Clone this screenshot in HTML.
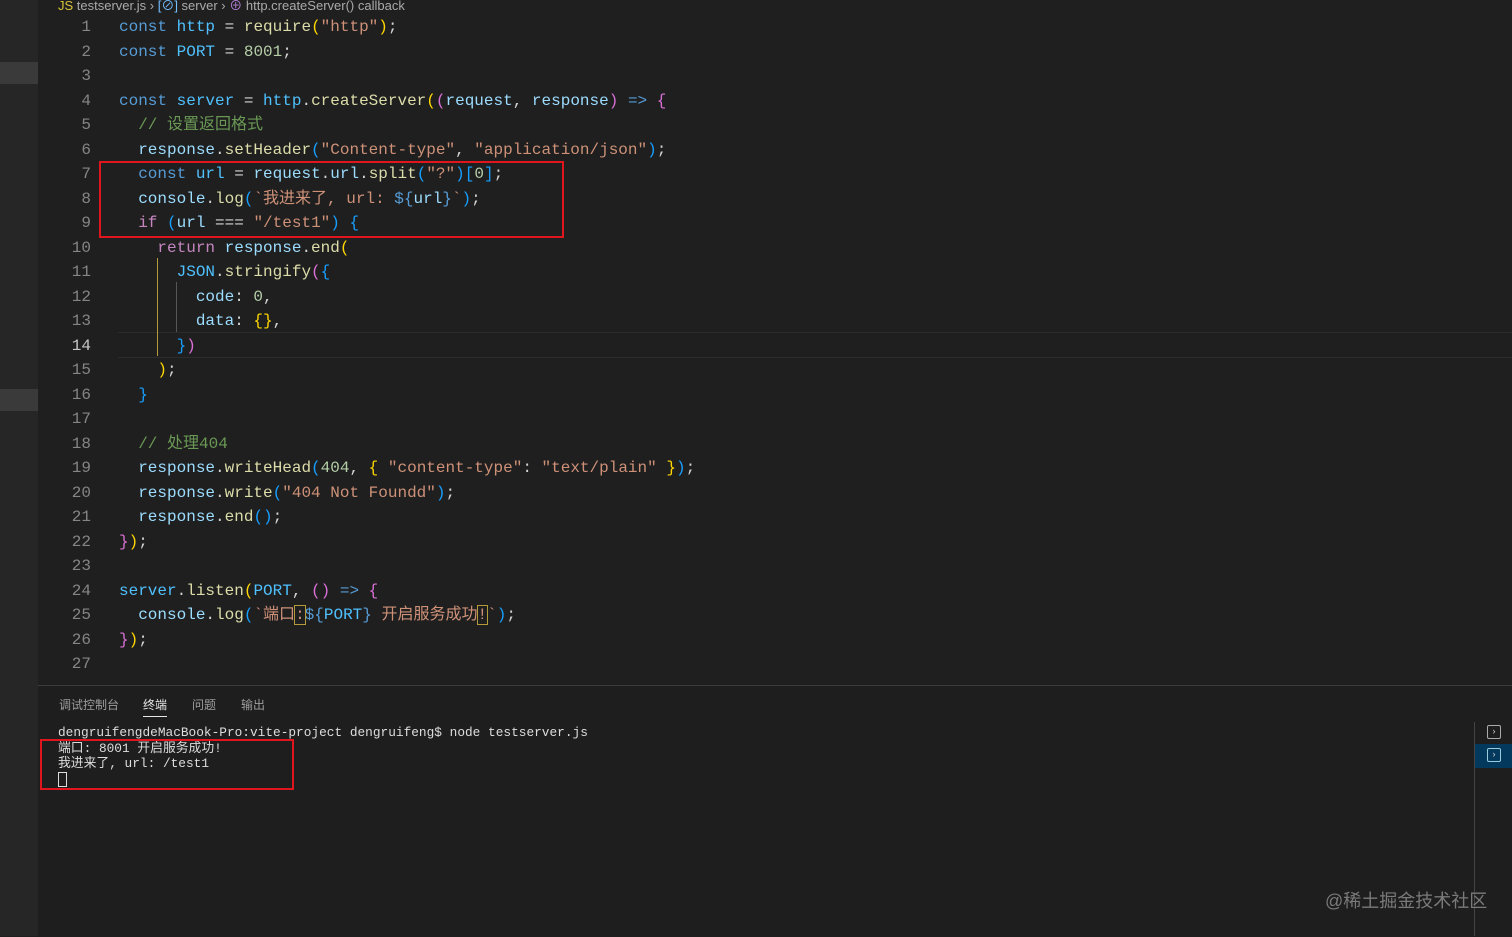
<html><head><style>
body{margin:0;width:1512px;height:936px;background:#1f1f1f;overflow:hidden;position:relative;font-family:"Liberation Mono","Noto Sans CJK SC",monospace}
.side{position:absolute;left:0;top:0;width:38px;height:936px;background:#262626}
.hl{position:absolute;left:0;width:38px;height:22px;background:#3a3a3a}
.bc{position:absolute;left:58px;top:-5px;font:13px "Liberation Sans","Noto Sans CJK SC",sans-serif;color:#aaa}
.code{position:absolute;left:38px;top:15px;font-size:16px;line-height:24.5px;color:#d4d4d4;white-space:pre}
.ln{display:inline-block;width:53px;text-align:right;color:#858585;margin-right:28px}
.k{color:#569cd6}.v{color:#4fc1ff}.p{color:#9cdcfe}.f{color:#dcdcaa}.s{color:#ce9178}.c{color:#6a9955}.n{color:#b5cea8}.y{color:#ffd700}.m{color:#da70d6}.b{color:#179fff}.r{color:#c586c0}
.box{position:absolute;border:2px solid #e0161e}
.panel{position:absolute;left:38px;top:685px;width:1474px;height:251px;border-top:1px solid #3c3c3c;background:#1e1e1e}
.tabs{position:absolute;left:59px;top:696px;font:12px "Liberation Sans","Noto Sans CJK SC",sans-serif;color:#9d9d9d}
.tabs span{position:absolute;white-space:nowrap}
.term{position:absolute;left:58px;top:725px;font-size:12.8px;line-height:15.5px;color:#ddd;white-space:pre}
</style></head><body>
<div class="side"></div><div class="hl" style="top:62px"></div><div class="hl" style="top:389px"></div>
<div class="bc"><span style="color:#d8c53c">JS</span> testserver.js › <span style="color:#75beff">[⊘]</span> server › <span style="color:#b180d7">⊕</span> http.createServer() callback</div>
<div style="position:absolute;left:118px;top:332px;width:1394px;height:24px;border-top:1px solid #2c2c2c;border-bottom:1px solid #2c2c2c"></div>
<div style="position:absolute;left:157px;top:258px;width:1px;height:98px;background:#b39b39"></div>
<div style="position:absolute;left:176px;top:282px;width:1px;height:50px;background:#555"></div>
<div class="code"><span class="ln">1</span><span class="k">const</span> <span class="v">http</span> = <span class="f">require</span><span class="y">(</span><span class="s">"http"</span><span class="y">)</span>;
<span class="ln">2</span><span class="k">const</span> <span class="v">PORT</span> = <span class="n">8001</span>;
<span class="ln">3</span>
<span class="ln">4</span><span class="k">const</span> <span class="v">server</span> = <span class="v">http</span>.<span class="f">createServer</span><span class="y">(</span><span class="m">(</span><span class="p">request</span>, <span class="p">response</span><span class="m">)</span> <span class="k">=&gt;</span> <span class="m">{</span>
<span class="ln">5</span>  <span class="c">// 设置返回格式</span>
<span class="ln">6</span>  <span class="p">response</span>.<span class="f">setHeader</span><span class="b">(</span><span class="s">"Content-type"</span>, <span class="s">"application/json"</span><span class="b">)</span>;
<span class="ln">7</span>  <span class="k">const</span> <span class="v">url</span> = <span class="p">request</span>.<span class="p">url</span>.<span class="f">split</span><span class="b">(</span><span class="s">"?"</span><span class="b">)[</span><span class="n">0</span><span class="b">]</span>;
<span class="ln">8</span>  <span class="p">console</span>.<span class="f">log</span><span class="b">(</span><span class="s">`我进来了, url: </span><span class="k">${</span><span class="p">url</span><span class="k">}</span><span class="s">`</span><span class="b">)</span>;
<span class="ln">9</span>  <span class="r">if</span> <span class="b">(</span><span class="p">url</span> === <span class="s">"/test1"</span><span class="b">)</span> <span class="b">{</span>
<span class="ln">10</span>    <span class="r">return</span> <span class="p">response</span>.<span class="f">end</span><span class="y">(</span>
<span class="ln">11</span>      <span class="v">JSON</span>.<span class="f">stringify</span><span class="m">(</span><span class="b">{</span>
<span class="ln">12</span>        <span class="p">code</span>: <span class="n">0</span>,
<span class="ln">13</span>        <span class="p">data</span>: <span class="y">{}</span>,
<span class="ln"><span style="color:#c6c6c6">14</span></span>      <span class="b">}</span><span class="m">)</span>
<span class="ln">15</span>    <span class="y">)</span>;
<span class="ln">16</span>  <span class="b">}</span>
<span class="ln">17</span>
<span class="ln">18</span>  <span class="c">// 处理404</span>
<span class="ln">19</span>  <span class="p">response</span>.<span class="f">writeHead</span><span class="b">(</span><span class="n">404</span>, <span class="y">{</span> <span class="s">"content-type"</span>: <span class="s">"text/plain"</span> <span class="y">}</span><span class="b">)</span>;
<span class="ln">20</span>  <span class="p">response</span>.<span class="f">write</span><span class="b">(</span><span class="s">"404 Not Foundd"</span><span class="b">)</span>;
<span class="ln">21</span>  <span class="p">response</span>.<span class="f">end</span><span class="b">()</span>;
<span class="ln">22</span><span class="m">}</span><span class="y">)</span>;
<span class="ln">23</span>
<span class="ln">24</span><span class="v">server</span>.<span class="f">listen</span><span class="y">(</span><span class="v">PORT</span>, <span class="m">()</span> <span class="k">=&gt;</span> <span class="m">{</span>
<span class="ln">25</span>  <span class="p">console</span>.<span class="f">log</span><span class="b">(</span><span class="s">`端口<span style="outline:1px solid #b39b39">:</span></span><span class="k">${</span><span class="v">PORT</span><span class="k">}</span><span class="s"> 开启服务成功<span style="outline:1px solid #b39b39">!</span>`</span><span class="b">)</span>;
<span class="ln">26</span><span class="m">}</span><span class="y">)</span>;
<span class="ln">27</span></div>
<div class="box" style="left:99px;top:161px;width:461px;height:73px"></div>
<div class="panel"></div>
<div class="tabs"><span style="left:0">调试控制台</span><span style="left:84px;color:#e7e7e7;border-bottom:1px solid #e7e7e7;padding-bottom:3px">终端</span><span style="left:133px">问题</span><span style="left:182px">输出</span></div>
<div class="term">dengruifengdeMacBook-Pro:vite-project dengruifeng$ node testserver.js
端口: 8001 开启服务成功!
我进来了, url: /test1
<span style="display:inline-block;width:7px;height:13px;border:1px solid #ddd;vertical-align:middle"></span></div>
<div class="box" style="left:40px;top:739px;width:250px;height:47px"></div>
<div style="position:absolute;left:1474px;top:722px;width:1px;height:214px;background:#444"></div>
<div style="position:absolute;left:1475px;top:744px;width:37px;height:24px;background:#04395e"></div>
<div style="position:absolute;left:1487px;top:725px;width:12px;height:12px;border:1px solid #aaa;border-radius:2px;font-size:9px;color:#ccc;line-height:12px;text-align:center">›</div>
<div style="position:absolute;left:1487px;top:748px;width:12px;height:12px;border:1px solid #9cd;border-radius:2px;font-size:9px;color:#ccc;line-height:12px;text-align:center">›</div>
<div style="position:absolute;left:1325px;top:887px;font:18px 'Liberation Sans','Noto Sans CJK SC',sans-serif;color:#7a7a7a">@稀土掘金技术社区</div>
</body></html>
